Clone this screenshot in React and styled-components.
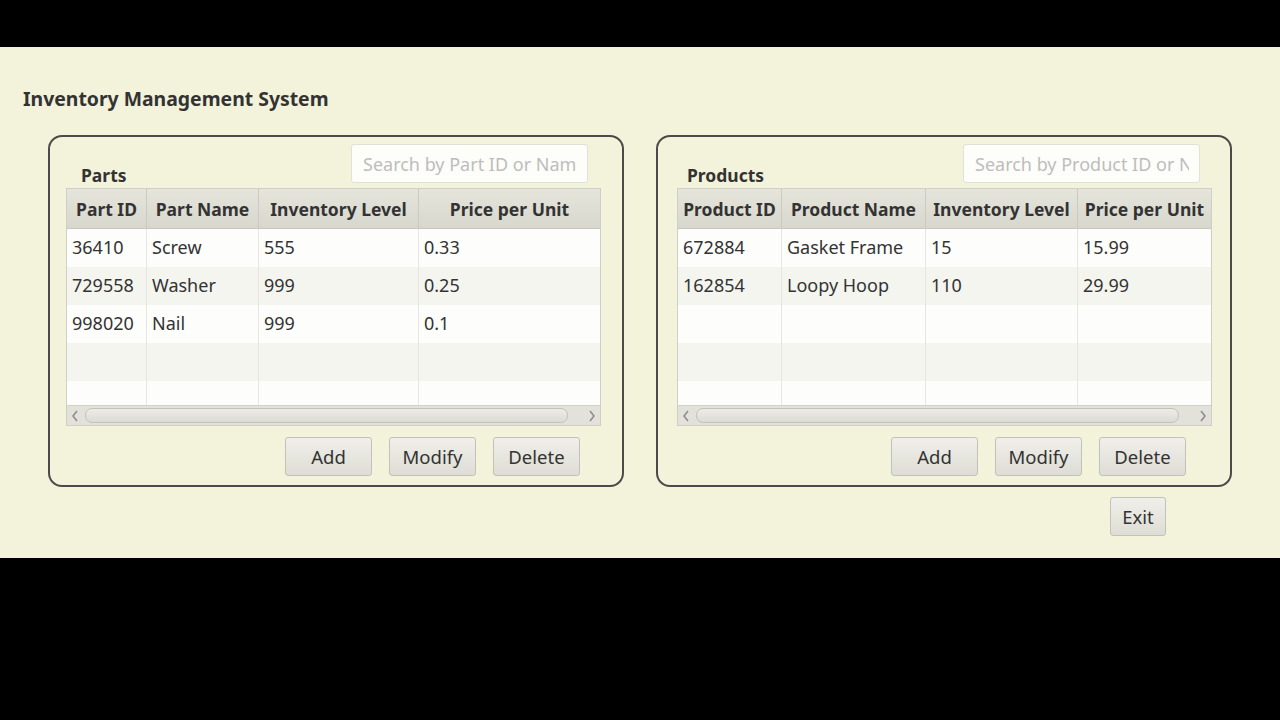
import React from 'react'
import styled, { createGlobalStyle } from 'styled-components';

const Global = createGlobalStyle`
  html, body { margin: 0; padding: 0; background: #000; }
  body { font-family: "Noto Sans", "Open Sans", sans-serif; }
`;

const Screen = styled.div`
  width: 1280px;
  height: 720px;
  background: #000;
  display: flex;
  flex-direction: column;
  padding-top: 47px;
  box-sizing: border-box;
`;

const Stage = styled.div`
  height: 511px;
  background: #f3f2da;
  display: flex;
  flex-direction: column;
  padding: 0 48px 0 23px;
  box-sizing: border-box;
`;

const Title = styled.div`
  margin-top: 39px;
  font-size: 19.4px;
  font-weight: 700;
  color: #333;
  line-height: 26px;
  height: 26px;
`;

const Panels = styled.div`
  margin-top: 23px;
  margin-left: 25px;
  display: flex;
  gap: 32px;
`;

const Panel = styled.div`
  width: 576px;
  height: 352px;
  box-sizing: border-box;
  border: 2px solid #4a4a4a;
  border-radius: 14px;
  padding: 7px ${({ $right }) => $right}px 0 ${({ $left }) => $left}px;
  display: flex;
  flex-direction: column;
`;

const PanelHead = styled.div`
  height: 39px;
  display: flex;
  align-items: flex-end;
  justify-content: space-between;
  margin-bottom: 5px;
`;

const Label = styled.div`
  font-size: 17.5px;
  font-weight: 700;
  color: #333;
  padding-left: ${({ $indent }) => $indent}px;
  line-height: 22px;
  margin-bottom: -3px;
`;

const Search = styled.input`
  width: 237px;
  height: 39px;
  box-sizing: border-box;
  align-self: flex-start;
  margin-right: ${({ $gap }) => $gap}px;
  border: 1px solid #e2e1d6;
  border-radius: 3px;
  background: #fdfdf9;
  padding: 0 10px 0 11px;
  font-family: inherit;
  font-size: 18px;
  color: #333;
  outline: none;
  &::placeholder { color: #bdbdbd; }
`;

const Table = styled.div`
  width: 535px;
  height: 238px;
  box-sizing: border-box;
  border: 1px solid #cfcfc8;
  background: #fcfcfa;
  display: flex;
  flex-direction: column;
  overflow: hidden;
`;

const Row = styled.div`
  display: grid;
  grid-template-columns: ${({ $cols }) => $cols};
  height: ${({ $h }) => $h || 38}px;
  flex-shrink: 0;
  background: ${({ $alt }) => ($alt ? '#f5f5f0' : '#fdfdfb')};
`;

const HeadRow = styled(Row)`
  height: 39px;
  background: linear-gradient(#e6e5dc, #d8d7ce);
  border-bottom: 1px solid #c8c8c0;
`;

const HeadCell = styled.div`
  display: flex;
  align-items: center;
  justify-content: center;
  font-size: 17.5px;
  font-weight: 700;
  color: #333;
  white-space: nowrap;
  overflow: hidden;
  border-right: 1px solid #cacac2;
  &:last-child { border-right: none; }
`;

const Cell = styled.div`
  display: flex;
  align-items: center;
  padding: 0 0 3px 5px;
  font-size: 18px;
  color: #333;
  white-space: nowrap;
  overflow: hidden;
  border-right: 1px solid #e6e6df;
  &:last-child { border-right: none; }
`;

const Scrollbar = styled.div`
  height: 22px;
  margin-top: auto;
  background: #e2e1da;
  border-top: 1px solid #d2d2ca;
  display: flex;
  align-items: center;
  padding: 0 4px;
  gap: 6px;
  color: #8a8a8a;
`;

const Arrow = styled.svg`
  width: 8px;
  height: 12px;
  flex-shrink: 0;
`;

const Thumb = styled.div`
  flex: 1;
  height: 13px;
  border: 1px solid #c2c2bc;
  border-radius: 7px;
  background: linear-gradient(#ecebe6, #dcdbd4);
  margin-right: 14px;
`;

const Buttons = styled.div`
  display: flex;
  justify-content: flex-end;
  gap: 17px;
  margin-top: 11px;
  margin-right: ${({ $gap }) => $gap}px;
`;

const Button = styled.button`
  width: ${({ $w }) => $w || 87}px;
  height: 39px;
  border: 1px solid #c2c2bc;
  border-radius: 3px;
  background: linear-gradient(#f0efe9, #dddcd5);
  font-family: inherit;
  font-size: 18.5px;
  color: #333;
  padding: 0;
`;

const Footer = styled.div`
  display: flex;
  justify-content: flex-end;
  margin-top: 10px;
  margin-right: 66px;
`;

const parts = {
  cols: '80px 112px 160px 1fr',
  heads: ['Part ID', 'Part Name', 'Inventory Level', 'Price per Unit'],
  rows: [
    ['36410', 'Screw', '555', '0.33'],
    ['729558', 'Washer', '999', '0.25'],
    ['998020', 'Nail', '999', '0.1'],
  ],
};

const products = {
  cols: '104px 144px 152px 1fr',
  heads: ['Product ID', 'Product Name', 'Inventory Level', 'Price per Unit'],
  rows: [
    ['672884', 'Gasket Frame', '15', '15.99'],
    ['162854', 'Loopy Hoop', '110', '29.99'],
  ],
};

const Chevron = ({ left }) => (
  <Arrow viewBox='0 0 8 12'>
    <path d={left ? 'M6 1 L2 6 L6 11' : 'M2 1 L6 6 L2 11'} fill='none' stroke='currentColor' strokeWidth='1.5' />
  </Arrow>
);

const DataTable = ({ data }) => {
  const filled = [...data.rows];
  while (filled.length < 5) filled.push(['', '', '', '']);
  return (
    <Table>
      <HeadRow $cols={data.cols}>
        {data.heads.map((h) => <HeadCell key={h}>{h}</HeadCell>)}
      </HeadRow>
      {filled.map((r, i) => (
        <Row key={i} $cols={data.cols} $alt={i % 2 === 1} $h={i === 4 ? 24 : 38}>
          {r.map((c, j) => <Cell key={j}>{c}</Cell>)}
        </Row>
      ))}
      <Scrollbar>
        <Chevron left />
        <Thumb />
        <Chevron />
      </Scrollbar>
    </Table>
  );
};

const InventoryPanel = ({ label, placeholder, data, left, right, indent, searchGap, btnGap }) => (
  <Panel $left={left} $right={right}>
    <PanelHead>
      <Label $indent={indent}>{label}</Label>
      <Search $gap={searchGap} placeholder={placeholder} />
    </PanelHead>
    <DataTable data={data} />
    <Buttons $gap={btnGap}>
      <Button>Add</Button>
      <Button>Modify</Button>
      <Button>Delete</Button>
    </Buttons>
  </Panel>
);

const App = () => (
  <Screen>
    <Global />
    <Stage>
      <Title>Inventory Management System</Title>
      <Panels>
        <InventoryPanel label='Parts' placeholder='Search by Part ID or Name' data={parts}
          left={16} right={21} indent={15} searchGap={13} btnGap={21} />
        <InventoryPanel label='Products' placeholder='Search by Product ID or Name' data={products}
          left={19} right={18} indent={10} searchGap={12} btnGap={26} />
      </Panels>
      <Footer>
        <Button $w={56}>Exit</Button>
      </Footer>
    </Stage>
  </Screen>
);

export default App
